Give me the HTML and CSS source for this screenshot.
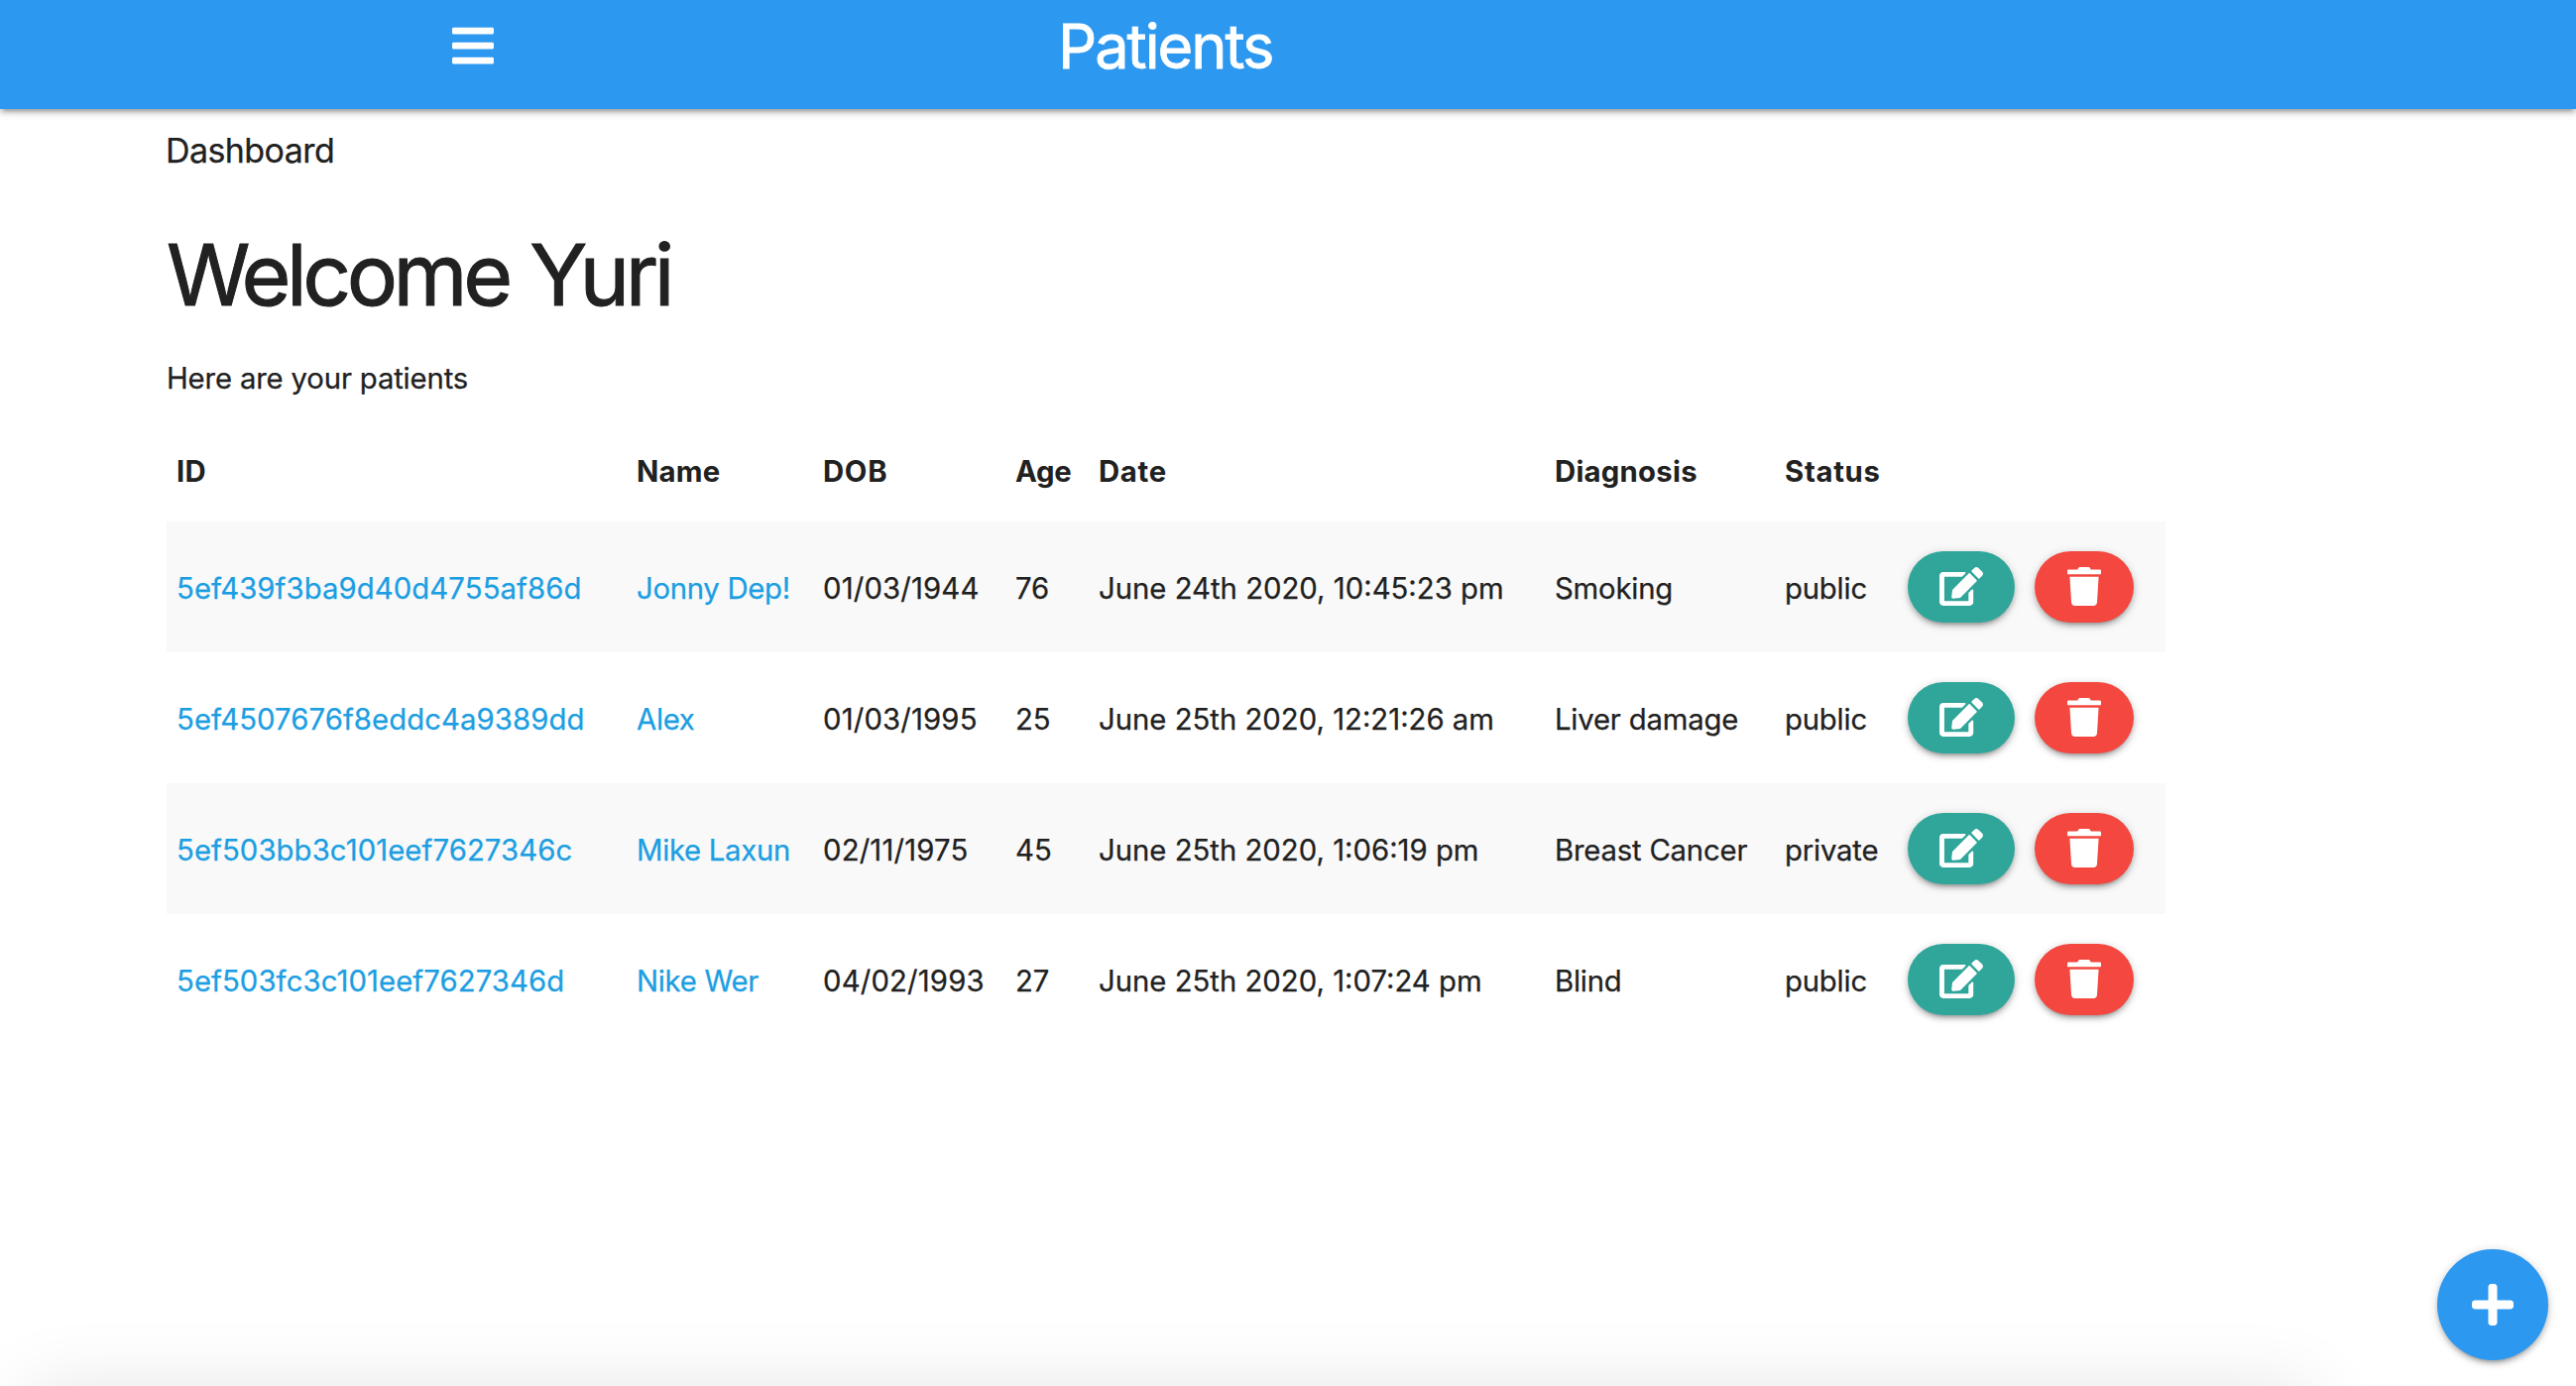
FILE: index.html
```html
<!DOCTYPE html>
<html lang="en">
<head>
<meta charset="utf-8">
<title>Patients</title>
<link rel="stylesheet" href="styles.css">
</head>
<body>
<svg class="sprite" aria-hidden="true">
  <symbol id="bars" viewBox="0 0 448 512"><path d="M16 132h416c8.837 0 16-7.163 16-16V76c0-8.837-7.163-16-16-16H16C7.163 60 0 67.163 0 76v40c0 8.837 7.163 16 16 16zm0 160h416c8.837 0 16-7.163 16-16v-40c0-8.837-7.163-16-16-16H16c-8.837 0-16 7.163-16 16v40c0 8.837 7.163 16 16 16zm0 160h416c8.837 0 16-7.163 16-16v-40c0-8.837-7.163-16-16-16H16c-8.837 0-16 7.163-16 16v40c0 8.837 7.163 16 16 16z"/></symbol>
  <symbol id="edit" viewBox="0 0 576 512"><path d="M402.6 83.2l90.2 90.2c3.8 3.8 3.8 10 0 13.8L274.4 405.6l-92.8 10.3c-12.4 1.4-22.9-9.1-21.5-21.5l10.3-92.8L388.8 83.2c3.8-3.8 10-3.8 13.8 0zm162-22.9l-48.8-48.8c-15.2-15.2-39.9-15.2-55.2 0l-35.4 35.4c-3.8 3.8-3.8 10 0 13.8l90.2 90.2c3.8 3.8 10 3.8 13.8 0l35.4-35.4c15.2-15.3 15.2-40 0-55.2zM384 346.2V448H64V128h229.8c3.2 0 6.2-1.3 8.5-3.5l40-40c7.6-7.6 2.2-20.5-8.5-20.5H48C21.5 64 0 85.5 0 112v352c0 26.5 21.5 48 48 48h352c26.5 0 48-21.5 48-48V306.2c0-10.7-12.9-16-20.5-8.5l-40 40c-2.2 2.3-3.5 5.3-3.5 8.5z"/></symbol>
  <symbol id="trash" viewBox="0 0 448 512"><path d="M432 32H312l-9.4-18.7A24 24 0 0 0 281.1 0H166.8a23.72 23.72 0 0 0-21.4 13.3L136 32H16A16 16 0 0 0 0 48v32a16 16 0 0 0 16 16h416a16 16 0 0 0 16-16V48a16 16 0 0 0-16-16zM32 128l21.2 339a48 48 0 0 0 47.9 45h245.8a48 48 0 0 0 47.9-45L416 128z"/></symbol>
  <symbol id="plus" viewBox="0 0 448 512"><path d="M416 208H272V64c0-17.67-14.33-32-32-32h-32c-17.67 0-32 14.33-32 32v144H32c-17.67 0-32 14.33-32 32v32c0 17.67 14.33 32 32 32h144v144c0 17.67 14.33 32 32 32h32c17.67 0 32-14.33 32-32V304h144c17.67 0 32-14.33 32-32v-32c0-17.67-14.33-32-32-32z"/></symbol>
</svg>

<nav class="navbar">
  <svg class="menu-icon"><use href="#bars"/></svg>
  <div class="brand">Patients</div>
</nav>

<main class="content">
  <div class="crumb">Dashboard</div>
  <h1 class="welcome">Welcome Yuri</h1>
  <p class="lead">Here are your patients</p>

  <table class="patients">
    <colgroup>
      <col class="col-id"><col class="col-name"><col class="col-dob"><col class="col-age"><col class="col-date"><col class="col-diagnosis"><col class="col-status"><col class="col-edit"><col class="col-delete">
    </colgroup>
    <thead>
      <tr><th>ID</th><th>Name</th><th class="wide">DOB</th><th class="tight">Age</th><th class="wide">Date</th><th>Diagnosis</th><th class="wide">Status</th><th></th><th></th></tr>
    </thead>
    <tbody>
      <tr>
        <td><a class="link">5ef439f3ba9d40d4755af86d</a></td><td><a class="link name">Jonny Dep!</a></td><td class="dob">01/03/1944</td><td>76</td><td>June 24th 2020, 10:45:23 pm</td><td class="word">Smoking</td><td class="word">public</td>
        <td class="action"><a class="btn edit"><svg class="icon-edit"><use href="#edit"/></svg></a></td>
        <td class="action"><a class="btn delete"><svg class="icon-trash"><use href="#trash"/></svg></a></td>
      </tr>
      <tr>
        <td><a class="link">5ef4507676f8eddc4a9389dd</a></td><td><a class="link name">Alex</a></td><td class="dob">01/03/1995</td><td>25</td><td>June 25th 2020, 12:21:26 am</td><td class="word">Liver damage</td><td class="word">public</td>
        <td class="action"><a class="btn edit"><svg class="icon-edit"><use href="#edit"/></svg></a></td>
        <td class="action"><a class="btn delete"><svg class="icon-trash"><use href="#trash"/></svg></a></td>
      </tr>
      <tr>
        <td><a class="link">5ef503bb3c101eef7627346c</a></td><td><a class="link name">Mike Laxun</a></td><td class="dob">02/11/1975</td><td>45</td><td>June 25th 2020, 1:06:19 pm</td><td class="word">Breast Cancer</td><td class="word">private</td>
        <td class="action"><a class="btn edit"><svg class="icon-edit"><use href="#edit"/></svg></a></td>
        <td class="action"><a class="btn delete"><svg class="icon-trash"><use href="#trash"/></svg></a></td>
      </tr>
      <tr>
        <td><a class="link">5ef503fc3c101eef7627346d</a></td><td><a class="link name">Nike Wer</a></td><td class="dob">04/02/1993</td><td>27</td><td>June 25th 2020, 1:07:24 pm</td><td class="word">Blind</td><td class="word">public</td>
        <td class="action"><a class="btn edit"><svg class="icon-edit"><use href="#edit"/></svg></a></td>
        <td class="action"><a class="btn delete"><svg class="icon-trash"><use href="#trash"/></svg></a></td>
      </tr>
    </tbody>
  </table>
</main>

<div class="bottom-sheet"></div>
<a class="fab"><svg class="icon-plus"><use href="#plus"/></svg></a>
</body>
</html>
```
FILE: styles.css
```css
* { box-sizing: border-box; }

html { overflow: hidden; }

body {
  margin: 0;
  height: 1398px;
  overflow: hidden;
  background: #fff;
  color: #212121;
  font-family: Inter, "Liberation Sans", sans-serif;
  font-size: 29.3px;
  line-height: 45px;
  -webkit-text-stroke: .25px currentColor;
}

svg { display: block; fill: #fff; }

.sprite { display: none; }

.navbar {
  display: flex;
  align-items: center;
  height: 110px;
  padding: 0 0 18px 456px;
  background: #2c98f0;
  box-shadow: 0 4px 4px 0 rgba(0, 0, 0, .14), 0 6px 2px -4px rgba(0, 0, 0, .12), 0 2px 10px 0 rgba(0, 0, 0, .2);
}

.menu-icon { width: 42px; height: 48px; }

.brand {
  margin-left: 569px;
  padding-top: 1px;
  color: #fff;
  font-size: 61.4px;
  letter-spacing: -2.03px;
  line-height: 92px;
  -webkit-text-stroke: .8px #fff;
}

.content { width: 2016px; margin-left: 168px; padding-top: 16px; }

.crumb { margin-left: -1px; font-size: 34px; letter-spacing: -.58px; line-height: 51px; }

.welcome {
  margin: 53px 0 35px;
  font-size: 85.7px;
  font-weight: 400;
  letter-spacing: -4.5px;
  word-spacing: 2px;
  line-height: 94px;
  -webkit-text-stroke: 1px currentColor;
}

.lead { margin: 0 0 21px; letter-spacing: -.16px; }

.patients { width: 2016px; border-collapse: collapse; table-layout: fixed; }

.patients tr { height: 132px; }
.patients thead tr { height: 101px; }
.patients tbody tr:nth-child(odd) { background: #f9f9f9; }

.patients th,
.patients td { padding: 2px 0 0 10px; text-align: left; vertical-align: middle; white-space: nowrap; }

.patients th { padding-top: 0; font-weight: 700; letter-spacing: .25px; -webkit-text-stroke: 0; }
.patients th.wide { letter-spacing: .7px; }
.patients th.tight { letter-spacing: -.2px; }

.patients td.dob { letter-spacing: .15px; }
.patients td.word { letter-spacing: -.2px; }
.patients td.action { padding-top: 0; }

.col-id { width: 464px; }
.col-name { width: 188px; }
.col-dob { width: 194px; }
.col-age { width: 84px; }
.col-date { width: 460px; }
.col-diagnosis { width: 232px; }
.col-status { width: 124px; }
.col-edit { width: 128px; }
.col-delete { width: 142px; }

.link { color: #1c9ee2; letter-spacing: .08px; }
.link.name { letter-spacing: -.3px; }

.btn {
  display: flex;
  align-items: center;
  justify-content: center;
  height: 72px;
  padding-bottom: 1px;
  border-radius: 36px;
  box-shadow: 0 4px 4px 0 rgba(0, 0, 0, .14), 0 6px 2px -4px rgba(0, 0, 0, .12), 0 2px 10px 0 rgba(0, 0, 0, .2);
}

.btn.edit { width: 108px; background: #30a69a; }
.btn.delete { width: 100px; background: #f3473f; }

.icon-edit { width: 44px; height: 39px; }
.icon-trash { width: 34px; height: 39px; }
.icon-plus { width: 42px; height: 48px; }

/* Closed sheet parked under the viewport; only its shadow shows */
.bottom-sheet {
  position: fixed;
  top: 1403px;
  left: 30px;
  width: 2300px;
  height: 300px;
  box-shadow: 0 0 72px rgba(0, 0, 0, .115);
}

.fab {
  position: fixed;
  right: 28px;
  bottom: 26px;
  display: flex;
  align-items: center;
  justify-content: center;
  width: 112px;
  height: 112px;
  border-radius: 50%;
  background: #2c98f0;
  box-shadow: 0 4px 4px 0 rgba(0, 0, 0, .14), 0 6px 2px -4px rgba(0, 0, 0, .12), 0 2px 10px 0 rgba(0, 0, 0, .2);
}
```
